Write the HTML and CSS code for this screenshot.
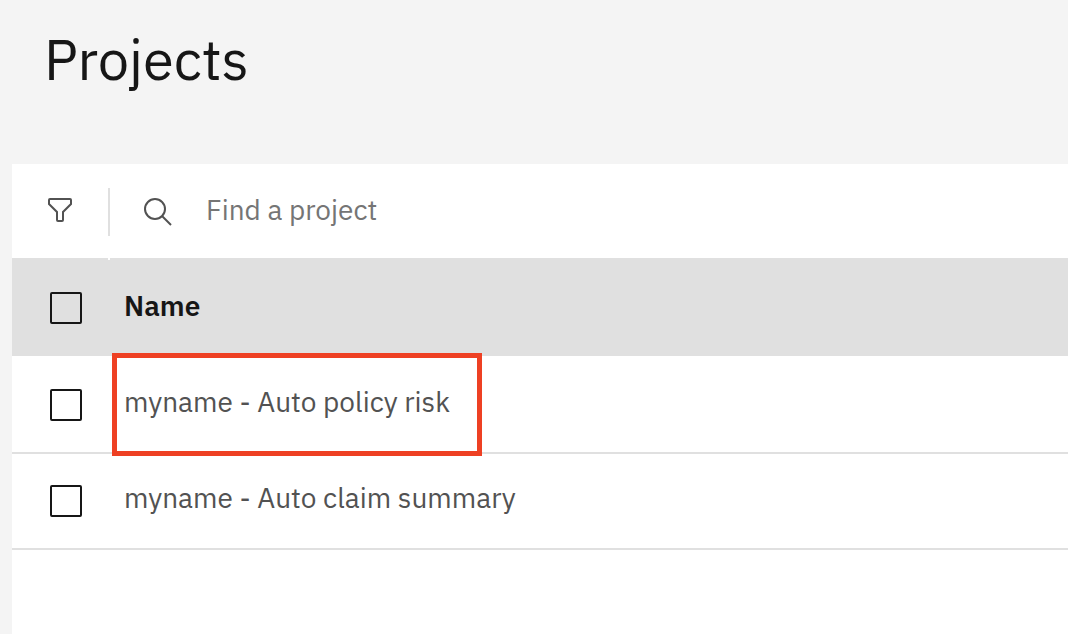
FILE: index.html
```html
<!DOCTYPE html>
<html lang="en">
<head>
<meta charset="utf-8">
<title>Projects</title>
<link rel="stylesheet" href="styles.css">
</head>
<body>
<header class="page-header">
  <h1 class="page-title">Projects</h1>
</header>
<main class="panel">
  <div class="toolbar">
    <button class="filter-button" type="button" aria-label="Filter">
      <svg class="filter-icon" viewBox="0 0 24 24" aria-hidden="true"><path d="M2 1H22Q23 1 23 2V6L15 14V22Q15 23 14 23H10Q9 23 9 22V14L1 6V2Q1 1 2 1Z"/></svg>
    </button>
    <label class="search">
      <svg class="search-icon" viewBox="0 0 28 28" aria-hidden="true"><circle cx="11" cy="11" r="10"/><path d="M18 18L27 27"/></svg>
      <input class="search-input" type="search" placeholder="Find a project" aria-label="Find a project">
    </label>
  </div>
  <table class="projects">
    <thead>
      <tr>
        <th class="select-cell" scope="col"><input class="checkbox" type="checkbox" aria-label="Select all projects"></th>
        <th class="name-cell" scope="col">Name</th>
      </tr>
    </thead>
    <tbody>
      <tr>
        <td class="select-cell"><input class="checkbox" type="checkbox" aria-label="Select myname - Auto policy risk"></td>
        <td class="name-cell"><a class="project-link highlighted" href="#risk">myname - Auto policy risk</a></td>
      </tr>
      <tr>
        <td class="select-cell"><input class="checkbox" type="checkbox" aria-label="Select myname - Auto claim summary"></td>
        <td class="name-cell"><a class="project-link" href="#claims">myname - Auto claim summary</a></td>
      </tr>
    </tbody>
  </table>
</main>
</body>
</html>
```
FILE: styles.css
```css
* {
  box-sizing: border-box;
}

body {
  display: flex;
  flex-direction: column;
  min-height: 100vh;
  margin: 0;
  background: #f4f4f4;
  color: #161616;
  font-family: "IBM Plex Sans", "Noto Sans", sans-serif;
  font-size: 28px;
  line-height: 36px;
}

.page-header {
  padding: 27px 44px 73px;
}

.page-title {
  margin: 0;
  font-size: 56px;
  font-weight: 400;
  line-height: 64px;
}

.panel {
  flex: 1;
  margin-left: 12px;
  background: #fff;
}

.toolbar {
  display: flex;
  align-items: center;
  height: 94px;
  padding-top: 2px;
}

.filter-button {
  position: relative;
  display: flex;
  align-items: center;
  width: 98px;
  height: 48px;
  padding: 0 36px;
  border: 0;
  border-right: 2px solid #e0e0e0;
  background: none;
}

.filter-button::after {
  content: "";
  position: absolute;
  right: -2px;
  bottom: -24px;
  width: 2px;
  height: 2px;
  background: #fff;
}

.filter-icon,
.search-icon {
  flex: none;
  fill: none;
  stroke: #525252;
  stroke-width: 2;
}

.filter-icon {
  width: 24px;
  height: 24px;
  margin-bottom: 4px;
}

.search {
  display: flex;
  flex: 1;
  align-items: center;
  gap: 34px;
  padding-left: 34px;
}

.search-icon {
  width: 28px;
  height: 28px;
}

.search-input {
  flex: 1;
  min-width: 0;
  padding: 0 0 4px;
  border: 0;
  outline: 0;
  background: none;
  color: #161616;
  font: inherit;
}

.search-input::placeholder {
  color: #757575;
}

.projects {
  width: 100%;
  border-collapse: separate;
  border-spacing: 0;
  text-align: left;
}

.select-cell,
.name-cell {
  padding: 0;
  vertical-align: top;
}

.select-cell {
  width: 112px;
  padding: 33px 0 0 38px;
}

.name-cell {
  padding-top: 28px;
}

th {
  height: 98px;
  background: #e0e0e0;
}

th.select-cell {
  padding-top: 34px;
}

.projects th.name-cell {
  padding-top: 30px;
  font-weight: 600;
}

td {
  height: 98px;
  border-bottom: 2px solid #e0e0e0;
}

tr + tr td {
  height: 96px;
}

tr + tr .select-cell {
  padding-top: 31px;
}

tr + tr .name-cell {
  padding-top: 26px;
}

.checkbox {
  display: block;
  width: 32px;
  height: 32px;
  margin: 0;
  border: 2px solid #161616;
  border-radius: 2px;
  background: transparent;
  appearance: none;
}

.checkbox:checked {
  background: #161616;
}

.project-link {
  color: #525252;
  text-decoration: none;
}

.highlighted {
  position: relative;
}

.highlighted::after {
  content: "";
  position: absolute;
  inset: -30px -32px -36px -12px;
  border: 5px solid #ee4023;
}
```
